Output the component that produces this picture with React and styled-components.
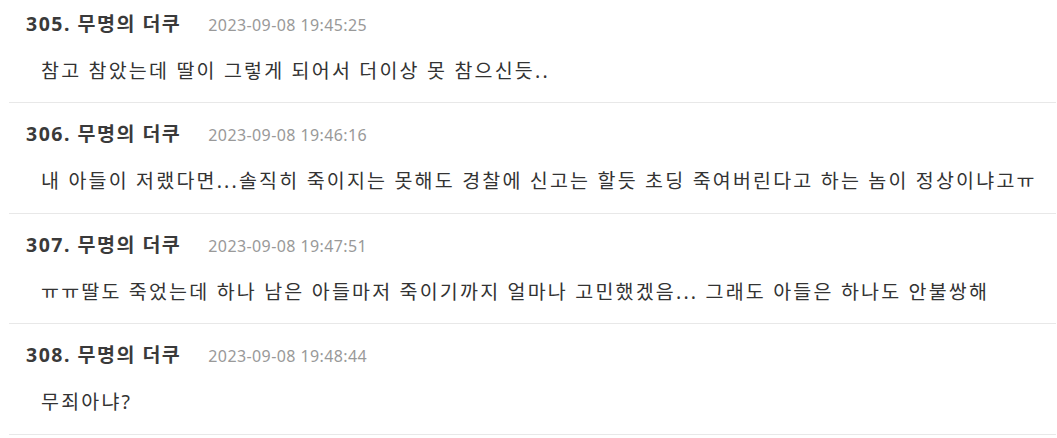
import styled, { createGlobalStyle } from 'styled-components';

const GlobalStyle = createGlobalStyle`
  body {
    margin: 0;
    background: #fff;
    font-family: "Noto Sans", "Noto Sans CJK KR", sans-serif;
  }
`;

const List = styled.ul`
  list-style: none;
  margin: 0;
  padding: 0;
`;

const Item = styled.li`
  margin: 0 1px 0 9px;
  padding: 16px 0 16px;
  border-bottom: 1px solid #e8e8e8;
  height: 77.4px;

  &:first-child {
    padding-top: 9px;
  }
`;

const Header = styled.div`
  display: flex;
  align-items: baseline;
  gap: 27px;
  padding-left: 17px;
  height: 30px;
  line-height: 30px;
`;

const Name = styled.span`
  font-size: 19.5px;
  font-weight: 700;
  letter-spacing: 1.5px;
  color: #3a3a3a;
`;

const Date = styled.span`
  font-size: 16px;
  letter-spacing: 0.4px;
  color: #999;
`;

const Content = styled.p`
  margin: 17px 0 0;
  padding-left: 32px;
  font-size: 19.5px;
  letter-spacing: 2.2px;
  line-height: 30px;
  color: #333;
  white-space: nowrap;
`;

const comments = [
  { no: 305, date: '2023-09-08 19:45:25', text: '참고 참았는데 딸이 그렇게 되어서 더이상 못 참으신듯..' },
  { no: 306, date: '2023-09-08 19:46:16', text: '내 아들이 저랬다면...솔직히 죽이지는 못해도 경찰에 신고는 할듯 초딩 죽여버린다고 하는 놈이 정상이냐고ㅠ' },
  { no: 307, date: '2023-09-08 19:47:51', text: 'ㅠㅠ딸도 죽었는데 하나 남은 아들마저 죽이기까지 얼마나 고민했겠음... 그래도 아들은 하나도 안불쌍해' },
  { no: 308, date: '2023-09-08 19:48:44', text: '무죄아냐?' },
];

export default function App() {
  return (
    <>
      <GlobalStyle />
      <List>
        {comments.map(c => (
          <Item key={c.no}>
            <Header>
              <Name>{c.no}. 무명의 더쿠</Name>
              <Date>{c.date}</Date>
            </Header>
            <Content>{c.text}</Content>
          </Item>
        ))}
      </List>
    </>
  );
}
